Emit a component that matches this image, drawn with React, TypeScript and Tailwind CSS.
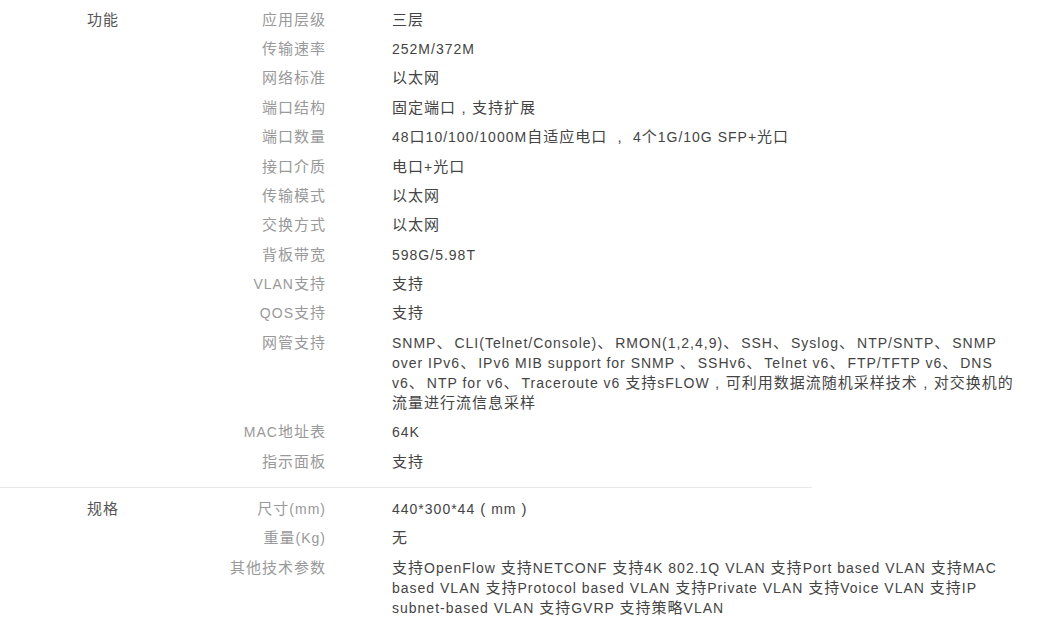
import React from "react";

type Row = { k: string; v: string };

const sections: { title: string; rows: Row[] }[] = [
  {
    title: "功能",
    rows: [
      { k: "应用层级", v: "三层" },
      { k: "传输速率", v: "252M/372M" },
      { k: "网络标准", v: "以太网" },
      { k: "端口结构", v: "固定端口，支持扩展" },
      { k: "端口数量", v: "48口10/100/1000M自适应电口 ， 4个1G/10G SFP+光口" },
      { k: "接口介质", v: "电口+光口" },
      { k: "传输模式", v: "以太网" },
      { k: "交换方式", v: "以太网" },
      { k: "背板带宽", v: "598G/5.98T" },
      { k: "VLAN支持", v: "支持" },
      { k: "QOS支持", v: "支持" },
      {
        k: "网管支持",
        v: "SNMP、CLI(Telnet/Console)、RMON(1,2,4,9)、SSH、Syslog、NTP/SNTP、SNMP over IPv6、IPv6 MIB support for SNMP 、SSHv6、Telnet v6、FTP/TFTP v6、DNS v6、NTP for v6、Traceroute v6 支持sFLOW，可利用数据流随机采样技术，对交换机的流量进行流信息采样",
      },
      { k: "MAC地址表", v: "64K" },
      { k: "指示面板", v: "支持" },
    ],
  },
  {
    title: "规格",
    rows: [
      { k: "尺寸(mm)", v: "440*300*44（mm）" },
      { k: "重量(Kg)", v: "无" },
      {
        k: "其他技术参数",
        v: "支持OpenFlow 支持NETCONF 支持4K 802.1Q VLAN 支持Port based VLAN 支持MAC based VLAN 支持Protocol based VLAN 支持Private VLAN 支持Voice VLAN 支持IP subnet-based VLAN 支持GVRP 支持策略VLAN",
      },
    ],
  },
];

const CJK = /([\u3000-\u9fff\uff00-\uffef]+)/;
const PUNCT: Record<string, string> = { "，": ",", "（": "(", "）": ")" };

function Mixed({ text }: { text: string }) {
  const parts = text.split(CJK);
  return (
    <>
      {parts.map((p, i) => {
        if (!p) return null;
        if (/[\u3000-\u9fff\uff00-\uffef]/.test(p)) {
          const sub = p.split(/([，（）、])/);
          return (
            <span
              key={i}
              className="text-[15px] leading-[15px]"
              style={{ fontFamily: '"Noto Sans CJK SC", sans-serif' }}
            >
              {sub.map((q, j) => {
                if (q === "、")
                  return (
                    <span key={j} className="mr-[2px]">
                      、
                    </span>
                  );
                if (PUNCT[q])
                  return (
                    <span
                      key={j}
                      className="inline-block w-[15px] mr-[1px] text-center tracking-normal text-[15px] leading-[15px]"
                      style={{ fontFamily: '"Liberation Sans", Arial, sans-serif' }}
                    >
                      {PUNCT[q]}
                    </span>
                  );
                return q;
              })}
            </span>
          );
        }
        return <React.Fragment key={i}>{p}</React.Fragment>;
      })}
    </>
  );
}

export default function App() {
  return (
    <div
      className="w-[1053px] h-[626px] overflow-hidden bg-white pt-[5px] text-[14px] leading-[20px] tracking-[1px]"
      style={{ fontFamily: '"Liberation Sans", Arial, "Noto Sans CJK SC", sans-serif' }}
    >
      {sections.map((s, i) => (
        <div key={s.title}>
          {i > 0 && <div className="w-[812px] h-px bg-[#e8e8e8] mt-[11px] mb-[6px]" />}
          <div className="flex">
            <div className="w-[87px] shrink-0" />
            <div className="w-[100px] shrink-0 py-[4.7px] text-[#555]">
              <Mixed text={s.title} />
            </div>
            <div className="flex flex-col">
              {s.rows.map((r) => (
                <div key={r.k} className="flex py-[4.7px]">
                  <div className="w-[139px] shrink-0 text-right text-[#999]">
                    <Mixed text={r.k} />
                  </div>
                  <div className="w-[632px] shrink-0 ml-[66px] text-[#444] break-words">
                    <Mixed text={r.v} />
                  </div>
                </div>
              ))}
            </div>
          </div>
        </div>
      ))}
    </div>
  );
}
